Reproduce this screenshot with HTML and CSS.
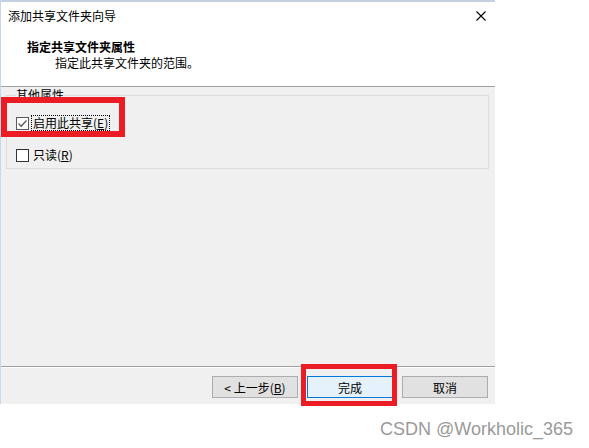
FILE: index.html
```html
<!DOCTYPE html>
<html lang="zh-CN">
<head>
    <meta charset="UTF-8">
    <title>添加共享文件夹向导</title>
    <link rel="stylesheet" href="styles.css">
</head>
<body>
    <div class="dialog">
        <div class="titlebar">
            <span class="title">添加共享文件夹向导</span>
            <span class="close-btn">
                <svg width="10" height="10" viewBox="0 0 10 10">
                    <path d="M0.5 0.5 L9.5 9.5 M9.5 0.5 L0.5 9.5" stroke="#000" stroke-width="1.1" fill="none"/>
                </svg>
            </span>
        </div>
        <div class="header">
            <h1>指定共享文件夹属性</h1>
            <p>指定此共享文件夹的范围。</p>
        </div>
        <div class="content">
            <fieldset class="group">
                <legend>其他属性</legend>
                <div class="check-row">
                    <span class="checkbox checked">
                        <svg width="11" height="11" viewBox="0 0 11 11">
                            <path d="M1.5 5.5 L4.2 8.2 L9.5 2.5" stroke="#5a5a5a" stroke-width="1.3" fill="none"/>
                        </svg>
                    </span>
                    <span class="label focused">启用此共享(<u>E</u>)</span>
                </div>
                <div class="check-row">
                    <span class="checkbox"></span>
                    <span class="label">只读(<u>R</u>)</span>
                </div>
            </fieldset>
        </div>
        <div class="footer">
            <button class="btn">&lt; 上一步(<u>B</u>)</button>
            <button class="btn btn-default">完成</button>
            <button class="btn">取消</button>
        </div>
    </div>
    <div class="watermark">CSDN @Workholic_365</div>

    <div class="mark mark-check"></div>
    <div class="mark mark-finish"></div>
</body>
</html>
```

FILE: styles.css
```css
* {
    margin: 0;
    padding: 0;
    box-sizing: border-box;
}

body {
    width: 589px;
    height: 448px;
    background: #fff;
    font-family: "Noto Sans CJK SC", "Liberation Sans", sans-serif;
    font-size: 12px;
    color: #000;
    position: relative;
    overflow: hidden;
}

.dialog {
    width: 495px;
    border-top: 2px solid #c6d0e2;
    border-left: 1px solid #c9d7ee;
}

.titlebar {
    height: 28px;
    display: flex;
    align-items: center;
    justify-content: space-between;
    padding: 0 8px 0 7px;
    line-height: 16px;
}

.close-btn {
    display: flex;
    width: 10px;
    height: 10px;
    margin-right: 1px;
    margin-top: -1px;
}

.header {
    height: 57px;
    padding: 9px 0 0 26px;
    border-bottom: 1px solid #a0a0a0;
    line-height: 16px;
}

.header h1 {
    font-size: 12px;
    font-weight: bold;
}

.header p {
    padding-left: 28px;
}

.content {
    height: 279px;
    background: #f0f0f0;
    padding-top: 1px;
}

.group {
    margin: 0 6px 0 5px;
    border: 1px solid #dcdcdc;
    padding: 4px 0 13px 9px;
    height: 81px;
}

.group legend {
    padding: 0;
    line-height: 14px;
    margin-left: 0;
}

.check-row {
    display: flex;
    align-items: center;
    height: 16px;
    margin-top: 9px;
}

.check-row + .check-row {
    margin-top: 16px;
}

.checkbox {
    width: 13px;
    height: 13px;
    border: 1px solid #333;
    background: #fff;
    display: flex;
    align-items: center;
    justify-content: center;
}

.checkbox.checked {
    border-color: #5a5a5a;
}

.label {
    margin-left: 2px;
    padding: 0 1px;
    line-height: 14px;
    border: 1px solid transparent;
}

.label.focused {
    border: 1px dotted #000;
}

.label u {
    text-decoration-color: #000;
}

.footer {
    height: 38px;
    background: #f0f0f0;
    border-top: 1px solid #a0a0a0;
    box-shadow: inset 0 1px 0 #fff;
    display: flex;
    justify-content: flex-end;
    align-items: flex-start;
    padding: 9px 7px 0 0;
    gap: 9px;
}

.btn {
    width: 86px;
    height: 22px;
    font-family: inherit;
    font-size: 12px;
    color: #000;
    background: #e1e1e1;
    border: 1px solid #adadad;
}

.btn-default {
    background: #e5f1fb;
    border-color: #0078d7;
}

.watermark {
    text-align: right;
    padding: 14px 16px 0 0;
    font-family: "Liberation Sans", Arial, sans-serif;
    font-size: 18px;
    line-height: 22px;
    color: #9a9a9a;
}

.mark {
    position: absolute;
    border: 6px solid #ec1c24;
}

.mark-check {
    left: 1px;
    top: 97px;
    width: 124px;
    height: 40px;
}

.mark-finish {
    left: 301px;
    top: 364px;
    width: 96px;
    height: 42px;
    border-width: 5px;
}
```
